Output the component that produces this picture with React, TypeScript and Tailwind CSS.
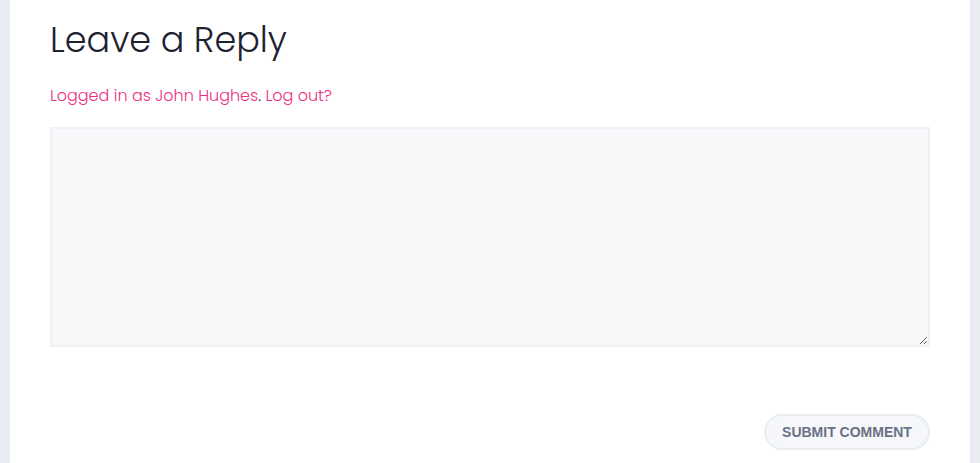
export default function App() {
  return (
    <div className="min-h-[463px] bg-[#e9edf2] px-[10px] font-['Poppins','Open_Sans',sans-serif]">
      <div className="min-h-[463px] bg-white px-10 pt-[18px]">
        <h2 className="text-[35px] font-light leading-[44px] text-[#1d2230]">Leave a Reply</h2>
        <p className="mt-[22px] text-[16px] font-light leading-6 text-[#1d2230]">
          <a className="text-[#ec2f82]">Logged in as John Hughes</a>.{' '}
          <a className="text-[#ec2f82]">Log out?</a>
        </p>
        <textarea className="mt-[19px] block h-[220px] w-full resize-y border-2 border-[#eef0f3] bg-[#f7f8fa] outline-none" />
        <div className="mt-[67px] flex justify-end">
          <button className="h-9 w-[166px] rounded-full border-2 border-[#e9edf2] bg-[#f5f7fa] font-['Liberation_Sans',Arial,sans-serif] text-[14px] font-bold uppercase text-[#6a7184]">
            Submit Comment
          </button>
        </div>
      </div>
    </div>
  )
}
